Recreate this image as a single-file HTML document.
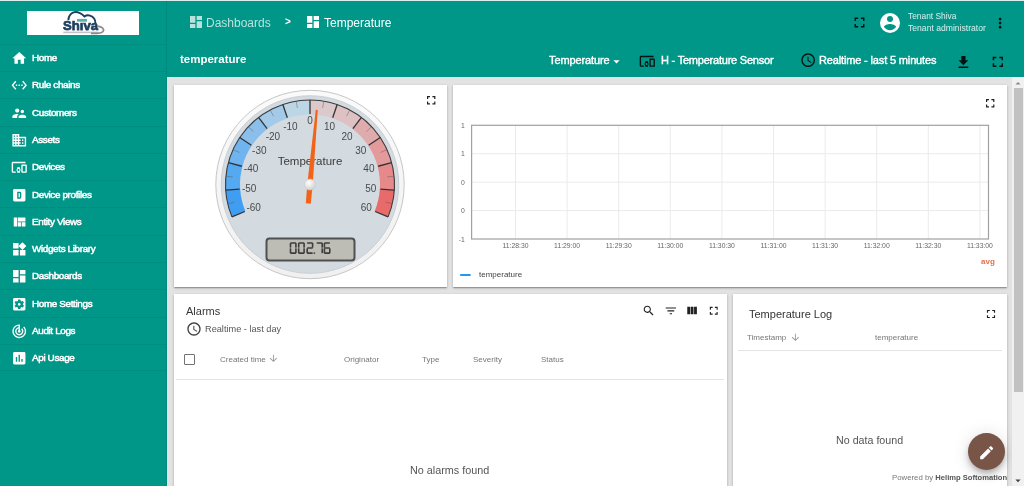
<!DOCTYPE html>
<html><head><meta charset="utf-8">
<style>
*{box-sizing:border-box;margin:0;padding:0}
html,body{-webkit-font-smoothing:antialiased;width:1024px;height:486px;overflow:hidden;background:#e3e3e3;font-family:"Liberation Sans",sans-serif}
.abs{position:absolute}
#side{position:absolute;left:0;top:0;width:167px;height:486px;background:#009688;border-right:1px solid #008a7d}
#top{position:absolute;left:167px;top:0;width:857px;height:77px;background:#009688}
.mi{position:absolute;left:0;width:166px;height:27.27px;border-top:1px solid rgba(0,0,0,0.05)}
.mi span{position:absolute;left:32px;top:-0.6px;line-height:27px;font-size:9.9px;font-weight:normal;-webkit-text-stroke:0.5px #fff;letter-spacing:-0.35px;will-change:transform;color:#fff;white-space:nowrap}
.mi svg{position:absolute;left:10.5px;top:5.4px;width:16.5px;height:16.5px;fill:#fff}
.card{position:absolute;background:#fff;box-shadow:0 1px 3px rgba(0,0,0,.2),0 1px 1px rgba(0,0,0,.14),0 2px 1px -1px rgba(0,0,0,.12)}
.t{position:absolute;white-space:nowrap;line-height:1;will-change:transform}
svg.i{position:absolute;will-change:transform}
</style></head><body>
<div id="side">
  <svg class="i" style="left:27px;top:10.6px;width:112px;height:24px" viewBox="0 0 112 24">
<rect x="0" y="0" width="112" height="24" fill="#fff"/>
<path d="M41.3 9.3 C41.5 4.5 44.5 1 48.5 1 C52.5 1 55.5 3.5 57.5 5.5 C59 4.3 61 4 63 4.6 C66.5 5.8 68.5 9 68.5 12.5" fill="none" stroke="#1f3f5e" stroke-width="1.9"/>
<text x="36" y="19.3" font-family="Liberation Sans" font-weight="bold" font-size="13.5" fill="#1f3f5e" stroke="#1f3f5e" stroke-width="0.75" textLength="35" lengthAdjust="spacingAndGlyphs">Sh&#305;va</text>
<rect x="50" y="7.9" width="10" height="2.8" fill="#3aa59a" opacity="0.85"/>
<path d="M70.5 15.2 C75.5 15.8 77.5 18.2 76 20.4 C74.6 22.3 70 22.6 64 22.4" fill="none" stroke="#8c8c8c" stroke-width="1.7"/>
<rect x="36.3" y="20.6" width="35" height="1.6" fill="#6f7f8c" opacity="0.45"/>
</svg>

  <div class="mi" style="top:43.80px"><svg viewBox="0 0 24 24"><path d="M10 20v-6h4v6h5v-8h3L12 3 2 12h3v8z"/></svg><span>Home</span></div>
<div class="mi" style="top:71.07px"><svg viewBox="0 0 24 24"><path d="M7.77 6.76L6.23 5.48.82 12l5.41 6.52 1.54-1.28L3.42 12l4.35-5.24zM7 13h2v-2H7v2zm10-2h-2v2h2v-2zm-6 2h2v-2h-2v2zm6.77-7.52l-1.54 1.28L20.58 12l-4.35 5.24 1.54 1.28L23.18 12l-5.410-6.52z"/></svg><span>Rule chains</span></div>
<div class="mi" style="top:98.34px"><svg viewBox="0 0 24 24"><path d="M16.5 12c1.38 0 2.49-1.12 2.49-2.5S17.88 7 16.5 7C15.12 7 14 8.12 14 9.5s1.12 2.5 2.5 2.5zM9 11c1.66 0 2.99-1.34 2.990-3S10.66 5 9 5C7.34 5 6 6.34 6 8s1.34 3 3 3zm7.5 3c-1.83 0-5.5.92-5.5 2.75V19h11v-2.250c0-1.83-3.67-2.75-5.5-2.75zM9 13c-2.33 0-7 1.17-7 3.5V19h7v-2.25c0-.85.33-2.34 2.37-3.47C10.5 13.1 9.66 13 9 13z"/></svg><span>Customers</span></div>
<div class="mi" style="top:125.61px"><svg viewBox="0 0 24 24"><path d="M12 7V3H2v18h20V7H12zM6 19H4v-2h2v2zm0-4H4v-2h2v2zm0-4H4V9h2v2zm0-4H4V5h2v2zm4 12H8v-2h2v2zm0-4H8v-2h2v2zm0-4H8V9h2v2zm0-4H8V5h2v2zm10 12h-8v-2h2v-2h-2v-2h2v-2h-2V9h8v10zm-2-8h-2v2h2v-2zm0 4h-2v2h2v-2z"/></svg><span>Assets</span></div>
<div class="mi" style="top:152.88px"><svg viewBox="0 0 24 24"><path d="M3 6h18V4H3c-1.1 0-2 .9-2 2v12c0 1.1.9 2 2 2h4v-2H3V6zm10 6H9v1.78c-.61.55-1 1.33-1 2.22s.39 1.67 1 2.22V20h4v-1.78c.61-.55 1-1.34 1-2.22s-.39-1.67-1-2.22V12zm-2 5.5c-.83 0-1.5-.67-1.5-1.5s.67-1.5 1.5-1.5 1.5.67 1.5 1.5-.67 1.5-1.5 1.5zM22 8h-6c-.5 0-1 .5-1 1v10c0 .5.5 1 1 1h6c.5 0 1-.5 1-1V9c0-.5-.5-1-1-1zm-1 10h-4v-8h4v8z"/></svg><span>Devices</span></div>
<div class="mi" style="top:180.15px"><svg viewBox="0 0 24 24"><path d="M5 3h14a2 2 0 0 1 2 2v14a2 2 0 0 1-2 2H5a2 2 0 0 1-2-2V5a2 2 0 0 1 2-2zm4 4v10h4a2 2 0 0 0 2-2V9a2 2 0 0 0-2-2H9zm2 2h2v6h-2V9z"/></svg><span>Device profiles</span></div>
<div class="mi" style="top:207.42px"><svg viewBox="0 0 24 24"><path d="M10 18h5v-6h-5v6zm-6 0h5V5H4v13zm12 0h5v-6h-5v6zM10 5v6h11V5H10z"/></svg><span>Entity Views</span></div>
<div class="mi" style="top:234.69px"><svg viewBox="0 0 24 24"><path d="M13 13v8h8v-8h-8zM3 21h8v-8H3v8zM3 3v8h8V3H3zm13.66-1.31L11 7.34 16.66 13l5.66-5.66-5.66-5.65z"/></svg><span>Widgets Library</span></div>
<div class="mi" style="top:261.96px"><svg viewBox="0 0 24 24"><path d="M3 13h8V3H3v10zm0 8h8v-6H3v6zm10 0h8V11h-8v10zm0-18v6h8V3h-8z"/></svg><span>Dashboards</span></div>
<div class="mi" style="top:289.23px"><svg viewBox="0 0 24 24"><path d="M12 10c-1.1 0-2 .9-2 2s.9 2 2 2 2-.9 2-2-.9-2-2-2zm7-7H5c-1.11 0-2 .9-2 2v14c0 1.1.89 2 2 2h14c1.11 0 2-.9 2-2V5c0-1.1-.89-2-2-2zm-1.75 9c0 .23-.02.46-.05.68l1.48 1.16c.13.11.17.3.08.45l-1.4 2.42c-.09.15-.27.21-.43.15l-1.74-.7c-.36.28-.76.51-1.18.69l-.26 1.85c-.03.17-.18.3-.35.3h-2.8c-.17 0-.32-.13-.35-.29l-.26-1.85c-.43-.18-.82-.41-1.18-.69l-1.74.7c-.16.06-.34 0-.43-.15l-1.4-2.42c-.09-.15-.05-.34.08-.45l1.48-1.16c-.03-.23-.05-.46-.05-.69 0-.23.02-.46.05-.68l-1.48-1.16c-.13-.11-.17-.3-.08-.45l1.4-2.42c.09-.15.27-.21.43-.15l1.74.7c.36-.28.76-.51 1.18-.69l.26-1.85c.03-.17.18-.3.35-.3h2.8c.17 0 .32.13.35.29l.26 1.85c.43.18.82.41 1.18.69l1.74-.7c.16-.06.34 0 .43.15l1.4 2.42c.09.15.05.34-.08.45l-1.48 1.16c.03.23.05.46.05.69z"/></svg><span>Home Settings</span></div>
<div class="mi" style="top:316.50px"><svg viewBox="0 0 24 24"><path d="M19.07 4.93l-1.41 1.41C19.1 7.79 20 9.79 20 12c0 4.42-3.58 8-8 8s-8-3.58-8-8c0-4.08 3.05-7.44 7-7.93v2.02C8.16 6.57 6 9.03 6 12c0 3.31 2.69 6 6 6s6-2.69 6-6c0-1.66-.67-3.16-1.76-4.24l-1.41 1.41C15.55 9.9 16 10.9 16 12c0 2.21-1.79 4-4 4s-4-1.79-4-4c0-1.86 1.28-3.41 3-3.860v2.14c-.6.35-1 .98-1 1.72 0 1.1.9 2 2 2s2-.9 2-2c0-.74-.4-1.38-1-1.72V2h-1C6.48 2 2 6.48 2 12s4.48 10 10 10 10-4.48 10-10c0-2.76-1.12-5.26-2.93-7.07z"/></svg><span>Audit Logs</span></div>
<div class="mi" style="top:343.77px;border-bottom:1px solid rgba(0,0,0,0.05)"><svg viewBox="0 0 24 24"><path d="M19 3H5c-1.1 0-2 .9-2 2v14c0 1.1.9 2 2 2h14c1.1 0 2-.9 2-2V5c0-1.1-.9-2-2-2zM9 17H7v-7h2v7zm4 0h-2V7h2v10zm4 0h-2v-4h2v4z"/></svg><span>Api Usage</span></div>
</div>
<div id="top"></div>
<svg class="i" style="left:188px;top:14.2px;width:16px;height:16px;fill:rgba(255,255,255,0.72)" viewBox="0 0 24 24"><path d="M3 13h8V3H3v10zm0 8h8v-6H3v6zm10 0h8V11h-8v10zm0-18v6h8V3h-8z"/></svg>
<div class="t" style="left:206px;top:17.3px;font-size:12px;color:rgba(255,255,255,0.72)">Dashboards</div>
<div class="t" style="left:285px;top:17px;font-size:10px;font-weight:bold;color:#fff">&gt;</div>
<svg class="i" style="left:305px;top:14.2px;width:16px;height:16px;fill:#fff" viewBox="0 0 24 24"><path d="M3 13h8V3H3v10zm0 8h8v-6H3v6zm10 0h8V11h-8v10zm0-18v6h8V3h-8z"/></svg>
<div class="t" style="left:323.5px;top:17.3px;font-size:12px;color:#fff">Temperature</div>
<svg class="i" style="left:851.4px;top:14.4px;width:17px;height:17px;fill:rgba(0,0,0,0.87)" viewBox="0 0 24 24"><path d="M7 14H5v5h5v-2H7v-3zm-2-4h2V7h3V5H5v5zm12 7h-3v2h5v-5h-2v3zM14 5v2h3v3h2V5h-5z"/></svg>
<svg class="i" style="left:878.4px;top:10.6px;width:24px;height:24px" viewBox="0 0 24 24"><circle cx="12" cy="12" r="10" fill="#fff"/><circle cx="12" cy="8" r="3" fill="#009688"/><path d="M12 19.2c-2.5 0-4.71-1.28-6-3.22.03-1.99 4-3.08 6-3.08 1.99 0 5.970 1.09 6 3.08-1.29 1.94-3.5 3.22-6 3.22z" fill="#009688"/></svg>
<div class="t" style="left:907.5px;top:12px;font-size:8.4px;color:rgba(255,255,255,0.85)">Tenant Shiva</div>
<div class="t" style="left:907.5px;top:24.3px;font-size:8.6px;color:rgba(255,255,255,0.85)">Tenant administrator</div>
<svg class="i" style="left:991.9px;top:14.9px;width:16.2px;height:16.2px;fill:rgba(0,0,0,0.87)" viewBox="0 0 24 24"><path d="M12 8c1.1 0 2-.9 2-2s-.9-2-2-2-2 .9-2 2 .9 2 2 2zm0 2c-1.1 0-2 .9-2 2s.9 2 2 2 2-.9 2-2-.9-2-2-2zm0 6c-1.1 0-2 .9-2 2s.9 2 2 2 2-.9 2-2-.9-2-2-2z"/></svg>

<div class="t" style="left:180px;top:54.2px;font-size:11.5px;font-weight:bold;color:#fff">temperature</div>
<div class="t" style="left:549.3px;top:55px;font-size:11px;-webkit-text-stroke:0.4px #fff;font-weight:normal;letter-spacing:-0.12px;color:#fff">Temperature</div>
<svg class="i" style="left:608.6px;top:53.7px;width:15px;height:15px;fill:#fff" viewBox="0 0 24 24"><path d="M7 10l5 5 5-5z"/></svg>
<svg class="i" style="left:639.3px;top:53.2px;width:16.6px;height:16.6px;fill:rgba(0,0,0,0.87)" viewBox="0 0 24 24"><path d="M3 6h18V4H3c-1.1 0-2 .9-2 2v12c0 1.1.9 2 2 2h4v-2H3V6zm10 6H9v1.78c-.61.55-1 1.33-1 2.22s.39 1.67 1 2.220V20h4v-1.78c.61-.55 1-1.34 1-2.22s-.39-1.67-1-2.22V12zm-2 5.5c-.83 0-1.5-.67-1.5-1.5s.67-1.5 1.5-1.5 1.5.67 1.5 1.5-.67 1.5-1.5 1.5zM22 8h-6c-.5 0-1 .5-1 1v10c0 .5.5 1 1 1h6c.5 0 1-.5 1-1V9c0-.5-.5-1-1-1zm-1 10h-4v-8h4v8z"/></svg>
<div class="t" style="left:660.8px;top:55px;font-size:11px;-webkit-text-stroke:0.4px #fff;font-weight:normal;letter-spacing:-0.22px;color:#fff">H - Temperature Sensor</div>
<svg class="i" style="left:800px;top:52.3px;width:16.3px;height:16.3px;fill:rgba(0,0,0,0.87)" viewBox="0 0 24 24"><path d="M11.99 2C6.47 2 2 6.48 2 12s4.47 10 9.99 10C17.52 22 22 17.52 22 12S17.52 2 11.99 2zM12 20c-4.42 0-8-3.58-8-8s3.58-8 8-8 8 3.58 8 8-3.58 8-8 8zm.5-13H11v6l5.25 3.15.75-1.23-4.5-2.67z"/></svg>
<div class="t" style="left:818.7px;top:55px;font-size:11px;-webkit-text-stroke:0.4px #fff;font-weight:normal;letter-spacing:-0.15px;color:#fff">Realtime - last 5 minutes</div>
<svg class="i" style="left:954.5px;top:54.3px;width:16.8px;height:16.8px;fill:rgba(0,0,0,0.87)" viewBox="0 0 24 24"><path d="M19 9h-4V3H9v6H5l7 7 7-7zM5 18v2h14v-2H5z"/></svg>
<svg class="i" style="left:988.5px;top:52.7px;width:17.7px;height:17.7px;fill:rgba(0,0,0,0.87)" viewBox="0 0 24 24"><path d="M7 14H5v5h5v-2H7v-3zm-2-4h2V7h3V5H5v5zm12 7h-3v2h5v-5h-2v3zM14 5v2h3v3h2V5h-5z"/></svg>


<div class="card" style="left:174px;top:84.5px;width:273px;height:202px"></div><div class="abs" style="left:174px;top:85px;width:272px;height:201px">
<!--GAUGE-->
<svg class="i" style="left:0;top:0;width:272px;height:201px" viewBox="0 0 272 201">
<defs><linearGradient id="rim" x1="0" y1="0" x2="0" y2="1"><stop offset="0" stop-color="#fafafa"/><stop offset="1" stop-color="#f0f0f0"/></linearGradient><radialGradient id="piv" cx="0.4" cy="0.35" r="0.7"><stop offset="0" stop-color="#ffffff"/><stop offset="1" stop-color="#cfcfcf"/></radialGradient></defs>
<circle cx="136" cy="99.5" r="94.2" fill="url(#rim)" stroke="#c6c6c6" stroke-width="1"/>
<circle cx="136" cy="99.5" r="88.8" fill="#d3dbe1" stroke="#c6ccd0" stroke-width="0.9"/>
<path d="M57.93 131.84A84.5 84.5 0 0 1 51.68 105.03L66.15 104.08A70 70 0 0 0 71.33 126.29Z" fill="#3f9ef2"/>
<path d="M51.68 105.03A84.5 84.5 0 0 1 54.38 77.63L68.39 81.38A70 70 0 0 0 66.15 104.08Z" fill="#55a9f0"/>
<path d="M54.38 77.63A84.5 84.5 0 0 1 65.74 52.55L77.80 60.61A70 70 0 0 0 68.39 81.38Z" fill="#6fb4ee"/>
<path d="M65.74 52.55A84.5 84.5 0 0 1 84.56 32.46L93.39 43.97A70 70 0 0 0 77.80 60.61Z" fill="#89bfea"/>
<path d="M84.56 32.46A84.5 84.5 0 0 1 108.84 19.48L113.50 33.21A70 70 0 0 0 93.39 43.97Z" fill="#a3cae8"/>
<path d="M108.84 19.48A84.5 84.5 0 0 1 136.00 15.00L136.00 29.50A70 70 0 0 0 113.50 33.21Z" fill="#bcd6e6"/>
<path d="M136.00 15.00A84.5 84.5 0 0 1 163.16 19.48L158.50 33.21A70 70 0 0 0 136.00 29.50Z" fill="#dcc9cb"/>
<path d="M163.16 19.48A84.5 84.5 0 0 1 187.44 32.46L178.61 43.97A70 70 0 0 0 158.50 33.21Z" fill="#ddc1c3"/>
<path d="M187.44 32.46A84.5 84.5 0 0 1 206.26 52.55L194.20 60.61A70 70 0 0 0 178.61 43.97Z" fill="#e0abad"/>
<path d="M206.26 52.55A84.5 84.5 0 0 1 217.62 77.63L203.61 81.38A70 70 0 0 0 194.20 60.61Z" fill="#e49a9b"/>
<path d="M217.62 77.63A84.5 84.5 0 0 1 220.32 105.03L205.85 104.08A70 70 0 0 0 203.61 81.38Z" fill="#e6898a"/>
<path d="M220.32 105.03A84.5 84.5 0 0 1 214.07 131.84L200.67 126.29A70 70 0 0 0 205.85 104.08Z" fill="#e86a6a"/>
<path d="M57.93 131.84A84.5 84.5 0 1 1 214.07 131.84" fill="none" stroke="#3a3a3a" stroke-width="1.1"/>
<line x1="70.87" y1="126.48" x2="57.93" y2="131.84" stroke="#333" stroke-width="1.3"/>
<line x1="65.65" y1="104.11" x2="51.68" y2="105.03" stroke="#333" stroke-width="1.3"/>
<line x1="67.90" y1="81.25" x2="54.38" y2="77.63" stroke="#333" stroke-width="1.3"/>
<line x1="77.38" y1="60.33" x2="65.74" y2="52.55" stroke="#333" stroke-width="1.3"/>
<line x1="93.08" y1="43.57" x2="84.56" y2="32.46" stroke="#333" stroke-width="1.3"/>
<line x1="113.34" y1="32.74" x2="108.84" y2="19.48" stroke="#333" stroke-width="1.3"/>
<line x1="136.00" y1="29.00" x2="136.00" y2="15.00" stroke="#333" stroke-width="1.3"/>
<line x1="158.66" y1="32.74" x2="163.16" y2="19.48" stroke="#333" stroke-width="1.3"/>
<line x1="178.92" y1="43.57" x2="187.44" y2="32.46" stroke="#333" stroke-width="1.3"/>
<line x1="194.62" y1="60.33" x2="206.26" y2="52.55" stroke="#333" stroke-width="1.3"/>
<line x1="204.10" y1="81.25" x2="217.62" y2="77.63" stroke="#333" stroke-width="1.3"/>
<line x1="206.35" y1="104.11" x2="220.32" y2="105.03" stroke="#333" stroke-width="1.3"/>
<line x1="201.13" y1="126.48" x2="214.07" y2="131.84" stroke="#333" stroke-width="1.3"/>
<line x1="60.52" y1="117.10" x2="54.19" y2="118.57" stroke="#555" stroke-opacity="0.55" stroke-width="0.8"/>
<line x1="58.87" y1="91.90" x2="52.40" y2="91.27" stroke="#555" stroke-opacity="0.55" stroke-width="0.8"/>
<line x1="65.41" y1="67.52" x2="59.49" y2="64.83" stroke="#555" stroke-opacity="0.55" stroke-width="0.8"/>
<line x1="79.44" y1="46.52" x2="74.69" y2="42.08" stroke="#555" stroke-opacity="0.55" stroke-width="0.8"/>
<line x1="99.47" y1="31.15" x2="96.40" y2="25.42" stroke="#555" stroke-opacity="0.55" stroke-width="0.8"/>
<line x1="123.38" y1="23.04" x2="122.32" y2="16.62" stroke="#555" stroke-opacity="0.55" stroke-width="0.8"/>
<line x1="148.62" y1="23.04" x2="149.68" y2="16.62" stroke="#555" stroke-opacity="0.55" stroke-width="0.8"/>
<line x1="172.53" y1="31.15" x2="175.60" y2="25.42" stroke="#555" stroke-opacity="0.55" stroke-width="0.8"/>
<line x1="192.56" y1="46.52" x2="197.31" y2="42.08" stroke="#555" stroke-opacity="0.55" stroke-width="0.8"/>
<line x1="206.59" y1="67.52" x2="212.51" y2="64.83" stroke="#555" stroke-opacity="0.55" stroke-width="0.8"/>
<line x1="213.13" y1="91.90" x2="219.60" y2="91.27" stroke="#555" stroke-opacity="0.55" stroke-width="0.8"/>
<line x1="211.48" y1="117.10" x2="217.81" y2="118.57" stroke="#555" stroke-opacity="0.55" stroke-width="0.8"/>
<text x="79.64" y="126.34" text-anchor="middle" font-family="Liberation Sans" font-size="10" fill="#4a4a4a">-60</text>
<text x="75.13" y="106.99" text-anchor="middle" font-family="Liberation Sans" font-size="10" fill="#4a4a4a">-50</text>
<text x="77.08" y="87.21" text-anchor="middle" font-family="Liberation Sans" font-size="10" fill="#4a4a4a">-40</text>
<text x="85.28" y="69.11" text-anchor="middle" font-family="Liberation Sans" font-size="10" fill="#4a4a4a">-30</text>
<text x="98.87" y="54.61" text-anchor="middle" font-family="Liberation Sans" font-size="10" fill="#4a4a4a">-20</text>
<text x="116.39" y="45.24" text-anchor="middle" font-family="Liberation Sans" font-size="10" fill="#4a4a4a">-10</text>
<text x="136.00" y="39.00" text-anchor="middle" font-family="Liberation Sans" font-size="10" fill="#4a4a4a">0</text>
<text x="155.61" y="45.24" text-anchor="middle" font-family="Liberation Sans" font-size="10" fill="#4a4a4a">10</text>
<text x="173.13" y="54.61" text-anchor="middle" font-family="Liberation Sans" font-size="10" fill="#4a4a4a">20</text>
<text x="186.72" y="69.11" text-anchor="middle" font-family="Liberation Sans" font-size="10" fill="#4a4a4a">30</text>
<text x="194.92" y="87.21" text-anchor="middle" font-family="Liberation Sans" font-size="10" fill="#4a4a4a">40</text>
<text x="196.87" y="106.99" text-anchor="middle" font-family="Liberation Sans" font-size="10" fill="#4a4a4a">50</text>
<text x="192.36" y="126.34" text-anchor="middle" font-family="Liberation Sans" font-size="10" fill="#4a4a4a">60</text>
<text x="136" y="80" text-anchor="middle" font-family="Liberation Sans" font-size="11.5" fill="#3c3c3c">Temperature</text>
<rect x="92.5" y="153.5" width="88" height="22" rx="3" fill="#bdbdb5" stroke="#505050" stroke-width="2"/>
<g opacity="0.92"><rect x="116.40" y="157.20" width="5.60" height="1.60" rx="0.4" fill="#333"/><rect x="121.10" y="157.90" width="1.60" height="4.85" rx="0.4" fill="#333"/><rect x="121.10" y="163.35" width="1.60" height="4.85" rx="0.4" fill="#333"/><rect x="116.40" y="167.30" width="5.60" height="1.60" rx="0.4" fill="#333"/><rect x="115.70" y="163.35" width="1.60" height="4.85" rx="0.4" fill="#333"/><rect x="115.70" y="157.90" width="1.60" height="4.85" rx="0.4" fill="#333"/><rect x="124.60" y="157.20" width="5.60" height="1.60" rx="0.4" fill="#333"/><rect x="129.30" y="157.90" width="1.60" height="4.85" rx="0.4" fill="#333"/><rect x="129.30" y="163.35" width="1.60" height="4.85" rx="0.4" fill="#333"/><rect x="124.60" y="167.30" width="5.60" height="1.60" rx="0.4" fill="#333"/><rect x="123.90" y="163.35" width="1.60" height="4.85" rx="0.4" fill="#333"/><rect x="123.90" y="157.90" width="1.60" height="4.85" rx="0.4" fill="#333"/><rect x="133.10" y="157.20" width="5.60" height="1.60" rx="0.4" fill="#333"/><rect x="137.80" y="157.90" width="1.60" height="4.85" rx="0.4" fill="#333"/><rect x="133.10" y="162.25" width="5.60" height="1.60" rx="0.4" fill="#333"/><rect x="132.40" y="163.35" width="1.60" height="4.85" rx="0.4" fill="#333"/><rect x="133.10" y="167.30" width="5.60" height="1.60" rx="0.4" fill="#333"/><rect x="142.70" y="157.20" width="5.60" height="1.60" rx="0.4" fill="#333"/><rect x="147.40" y="157.90" width="1.60" height="4.85" rx="0.4" fill="#333"/><rect x="147.40" y="163.35" width="1.60" height="4.85" rx="0.4" fill="#333"/><rect x="150.30" y="157.20" width="5.60" height="1.60" rx="0.4" fill="#333"/><rect x="149.60" y="157.90" width="1.60" height="4.85" rx="0.4" fill="#333"/><rect x="150.30" y="162.25" width="5.60" height="1.60" rx="0.4" fill="#333"/><rect x="149.60" y="163.35" width="1.60" height="4.85" rx="0.4" fill="#333"/><rect x="150.30" y="167.30" width="5.60" height="1.60" rx="0.4" fill="#333"/><rect x="155.00" y="163.35" width="1.60" height="4.85" rx="0.4" fill="#333"/><rect x="139.60" y="167.40" width="1.5" height="1.5" fill="#333"/></g>
<polygon points="141.77,24.72 143.76,24.90 138.69,99.74 136.78,118.65 131.80,118.20 133.31,99.26" fill="#f26318"/>
<circle cx="136" cy="99.5" r="5.5" fill="url(#piv)" stroke="#c8c8c8" stroke-width="0.5"/>
</svg>
<!--/GAUGE-->
<svg class="i" style="left:249.8px;top:7.599999999999994px;width:14.4px;height:14.4px;fill:rgba(0,0,0,0.87)" viewBox="0 0 24 24"><path d="M7 14H5v5h5v-2H7v-3zm-2-4h2V7h3V5H5v5zm12 7h-3v2h5v-5h-2v3zM14 5v2h3v3h2V5h-5z"/></svg>
</div>
<div class="card" style="left:453px;top:84.5px;width:554px;height:202px"></div><div class="abs" style="left:454px;top:85px;width:553px;height:201px">
<!--CHART-->
<svg class="i" style="left:0;top:0;width:553px;height:201px" viewBox="0 0 553 201">
<line x1="17.60" y1="68.72" x2="534.50" y2="68.72" stroke="#ebebeb" stroke-width="1"/>
<line x1="17.60" y1="97.15" x2="534.50" y2="97.15" stroke="#ebebeb" stroke-width="1"/>
<line x1="17.60" y1="125.57" x2="534.50" y2="125.57" stroke="#ebebeb" stroke-width="1"/>
<line x1="61.50" y1="40.30" x2="61.50" y2="154.00" stroke="#ebebeb" stroke-width="1"/>
<line x1="113.10" y1="40.30" x2="113.10" y2="154.00" stroke="#ebebeb" stroke-width="1"/>
<line x1="164.70" y1="40.30" x2="164.70" y2="154.00" stroke="#ebebeb" stroke-width="1"/>
<line x1="216.30" y1="40.30" x2="216.30" y2="154.00" stroke="#ebebeb" stroke-width="1"/>
<line x1="267.90" y1="40.30" x2="267.90" y2="154.00" stroke="#ebebeb" stroke-width="1"/>
<line x1="319.50" y1="40.30" x2="319.50" y2="154.00" stroke="#ebebeb" stroke-width="1"/>
<line x1="371.10" y1="40.30" x2="371.10" y2="154.00" stroke="#ebebeb" stroke-width="1"/>
<line x1="422.70" y1="40.30" x2="422.70" y2="154.00" stroke="#ebebeb" stroke-width="1"/>
<line x1="474.30" y1="40.30" x2="474.30" y2="154.00" stroke="#ebebeb" stroke-width="1"/>
<line x1="525.90" y1="40.30" x2="525.90" y2="154.00" stroke="#ebebeb" stroke-width="1"/>
<rect x="17.60" y="40.30" width="516.90" height="113.70" fill="none" stroke="#a0a0a0" stroke-width="1.2"/>
<text x="61.50" y="162.80" text-anchor="middle" font-family="Liberation Sans" font-size="6.8" fill="#666">11:28:30</text>
<text x="113.10" y="162.80" text-anchor="middle" font-family="Liberation Sans" font-size="6.8" fill="#666">11:29:00</text>
<text x="164.70" y="162.80" text-anchor="middle" font-family="Liberation Sans" font-size="6.8" fill="#666">11:29:30</text>
<text x="216.30" y="162.80" text-anchor="middle" font-family="Liberation Sans" font-size="6.8" fill="#666">11:30:00</text>
<text x="267.90" y="162.80" text-anchor="middle" font-family="Liberation Sans" font-size="6.8" fill="#666">11:30:30</text>
<text x="319.50" y="162.80" text-anchor="middle" font-family="Liberation Sans" font-size="6.8" fill="#666">11:31:00</text>
<text x="371.10" y="162.80" text-anchor="middle" font-family="Liberation Sans" font-size="6.8" fill="#666">11:31:30</text>
<text x="422.70" y="162.80" text-anchor="middle" font-family="Liberation Sans" font-size="6.8" fill="#666">11:32:00</text>
<text x="474.30" y="162.80" text-anchor="middle" font-family="Liberation Sans" font-size="6.8" fill="#666">11:32:30</text>
<text x="525.90" y="162.80" text-anchor="middle" font-family="Liberation Sans" font-size="6.8" fill="#666">11:33:00</text>
<text x="10.80" y="42.80" text-anchor="end" font-family="Liberation Sans" font-size="6.8" fill="#666">1</text>
<text x="10.80" y="71.22" text-anchor="end" font-family="Liberation Sans" font-size="6.8" fill="#666">1</text>
<text x="10.80" y="99.65" text-anchor="end" font-family="Liberation Sans" font-size="6.8" fill="#666">0</text>
<text x="10.80" y="128.07" text-anchor="end" font-family="Liberation Sans" font-size="6.8" fill="#666">0</text>
<text x="10.80" y="156.50" text-anchor="end" font-family="Liberation Sans" font-size="6.8" fill="#666">-1</text>
<rect x="6.20" y="189.00" width="10.4" height="2" fill="#2196f3"/>
<text x="25.00" y="192.00" font-family="Liberation Sans" font-size="8" fill="#444">temperature</text>
<text x="527.00" y="178.70" font-family="Liberation Sans" font-size="8" font-weight="bold" fill="#e8704a">avg</text>
</svg>
<!--/CHART-->
<svg class="i" style="left:529.2px;top:11.099999999999994px;width:14.4px;height:14.4px;fill:rgba(0,0,0,0.87)" viewBox="0 0 24 24"><path d="M7 14H5v5h5v-2H7v-3zm-2-4h2V7h3V5H5v5zm12 7h-3v2h5v-5h-2v3zM14 5v2h3v3h2V5h-5z"/></svg>
</div>
<div class="card" style="left:174px;top:293.7px;width:553.2px;height:200px"></div><div class="abs" style="left:174px;top:294px;width:553px;height:200px">
<div class="t" style="left:11.800000000000011px;top:12.1px;font-size:11px;color:#383838">Alarms</div>
<svg class="i" style="left:12.20px;top:26.50px;width:16px;height:16px;fill:rgba(0,0,0,0.75)" viewBox="0 0 24 24"><path d="M11.99 2C6.47 2 2 6.48 2 12s4.47 10 9.99 10C17.52 22 22 17.52 22 12S17.52 2 11.99 2zM12 20c-4.42 0-8-3.58-8-8s3.58-8 8-8 8 3.58 8 8-3.58 8-8 8zm.5-13H11v6l5.25 3.15.75-1.23-4.5-2.67z"/></svg>
<div class="t" style="left:30.5px;top:31px;font-size:9.2px;color:#555">Realtime - last day</div>
<div class="abs" style="left:10px;top:60px;width:10.5px;height:10.5px;border:1.4px solid rgba(0,0,0,0.55);border-radius:1px"></div>
<div class="t" style="left:45.5px;top:61.5px;font-size:8px;color:#777">Created time</div>
<div class="t" style="left:169.5px;top:61.5px;font-size:8px;color:#777">Originator</div>
<div class="t" style="left:248px;top:61.5px;font-size:8px;color:#777">Type</div>
<div class="t" style="left:299px;top:61.5px;font-size:8px;color:#777">Severity</div>
<div class="t" style="left:367px;top:61.5px;font-size:8px;color:#777">Status</div>
<svg class="i" style="left:94.10px;top:59.30px;width:10.8px;height:10.8px;fill:rgba(0,0,0,0.4)" viewBox="0 0 24 24"><path d="M20 12l-1.41-1.41L13 16.17V4h-2v12.17l-5.58-5.59L4 12l8 8 8-8z"/></svg>
<div class="abs" style="left:2px;top:84.5px;width:548px;height:1px;background:#e4e4e4"></div>
<svg class="i" style="left:468.30px;top:10.00px;width:13.4px;height:13.4px;fill:rgba(0,0,0,0.87)" viewBox="0 0 24 24"><path d="M15.5 14h-.79l-.28-.27C15.41 12.59 16 11.11 16 9.5 16 5.91 13.09 3 9.5 3S3 5.91 3 9.5 5.91 16 9.5 16c1.61 0 3.09-.59 4.23-1.57l.27.28v.79l5 4.99L20.49 19l-4.99-5zm-6 0C7.01 14 5 11.99 5 9.5S7.01 5 9.5 5 14 7.01 14 9.5 11.99 14 9.5 14z"/></svg>
<svg class="i" style="left:489.70px;top:10.00px;width:13.7px;height:13.7px;fill:rgba(0,0,0,0.87)" viewBox="0 0 24 24"><path d="M10 18h4v-2h-4v2zM3 6v2h18V6H3zm3 7h12v-2H6v2z"/></svg>
<svg class="i" style="left:511.20px;top:10.20px;width:13.6px;height:13.6px;fill:rgba(0,0,0,0.87)" viewBox="0 0 24 24"><path d="M10 18h5V5h-5v13zm-6 0h5V5H4v13zM16 5v13h5V5h-5z"/></svg>
<svg class="i" style="left:532.50px;top:10.00px;width:13.5px;height:13.5px;fill:rgba(0,0,0,0.87)" viewBox="0 0 24 24"><path d="M7 14H5v5h5v-2H7v-3zm-2-4h2V7h3V5H5v5zm12 7h-3v2h5v-5h-2v3zM14 5v2h3v3h2V5h-5z"/></svg>
<div class="t" style="left:236px;top:170.60000000000002px;font-size:10.8px;color:#555">No alarms found</div>
</div>
<div class="card" style="left:733px;top:293.7px;width:274px;height:200px"></div><div class="abs" style="left:733px;top:294px;width:274px;height:200px">
<div class="t" style="left:15.5px;top:14.800000000000011px;font-size:11px;color:#333">Temperature Log</div>
<svg class="i" style="left:250.50px;top:12.90px;width:14px;height:14px;fill:rgba(0,0,0,0.87)" viewBox="0 0 24 24"><path d="M7 14H5v5h5v-2H7v-3zm-2-4h2V7h3V5H5v5zm12 7h-3v2h5v-5h-2v3zM14 5v2h3v3h2V5h-5z"/></svg>
<div class="t" style="left:13.5px;top:39.60000000000002px;font-size:8px;color:#777">Timestamp</div>
<svg class="i" style="left:57.00px;top:37.50px;width:10.8px;height:10.8px;fill:rgba(0,0,0,0.4)" viewBox="0 0 24 24"><path d="M20 12l-1.41-1.41L13 16.17V4h-2v12.17l-5.58-5.59L4 12l8 8 8-8z"/></svg>
<div class="t" style="left:141.5px;top:39.60000000000002px;font-size:8px;color:#777">temperature</div>
<div class="abs" style="left:5px;top:56px;width:264px;height:1px;background:#e4e4e4"></div>
<div class="t" style="left:103.20000000000005px;top:140.8px;font-size:10.7px;color:#555">No data found</div>
</div>
<div class="t" style="left:891.5px;top:474px;font-size:7.8px;color:#777">Powered by <b style="color:#555;font-size:7.6px">Helimp Softomation</b></div>
<div class="abs" style="left:968.2px;top:432.7px;width:37.2px;height:37.2px;border-radius:50%;background:#795548;box-shadow:0 3px 5px -1px rgba(0,0,0,.2),0 6px 10px 0 rgba(0,0,0,.14),0 1px 18px 0 rgba(0,0,0,.12)"></div>
<svg class="i" style="left:977.80px;top:443.60px;width:17.3px;height:17.3px;fill:#fff" viewBox="0 0 24 24"><path d="M3 17.25V21h3.75L17.81 9.94l-3.75-3.75L3 17.25zM20.71 7.04c.39-.39.39-1.02 0-1.41l-2.34-2.34c-.39-.39-1.02-.39-1.41 0l-1.83 1.83 3.75 3.75 1.83-1.83z"/></svg>
<div class="abs" style="left:1012px;top:77px;width:12px;height:409px;background:#f1f1f1"></div>
<div class="abs" style="left:1014px;top:88px;width:9px;height:304px;background:#c1c1c1"></div>
<svg class="i" style="left:1012px;top:77px;width:12px;height:12px" viewBox="0 0 12 12"><path d="M3.4 7.6L6 5 8.6 7.6z" fill="#8a8a8a"/></svg>
<svg class="i" style="left:1012px;top:475.3px;width:12px;height:12px" viewBox="0 0 12 12"><path d="M3.4 4.6L6 7.2 8.6 4.6z" fill="#444"/></svg>
<div class="abs" style="left:0;top:0;width:1024px;height:1px;background:#dcefee"></div>
</body></html>
